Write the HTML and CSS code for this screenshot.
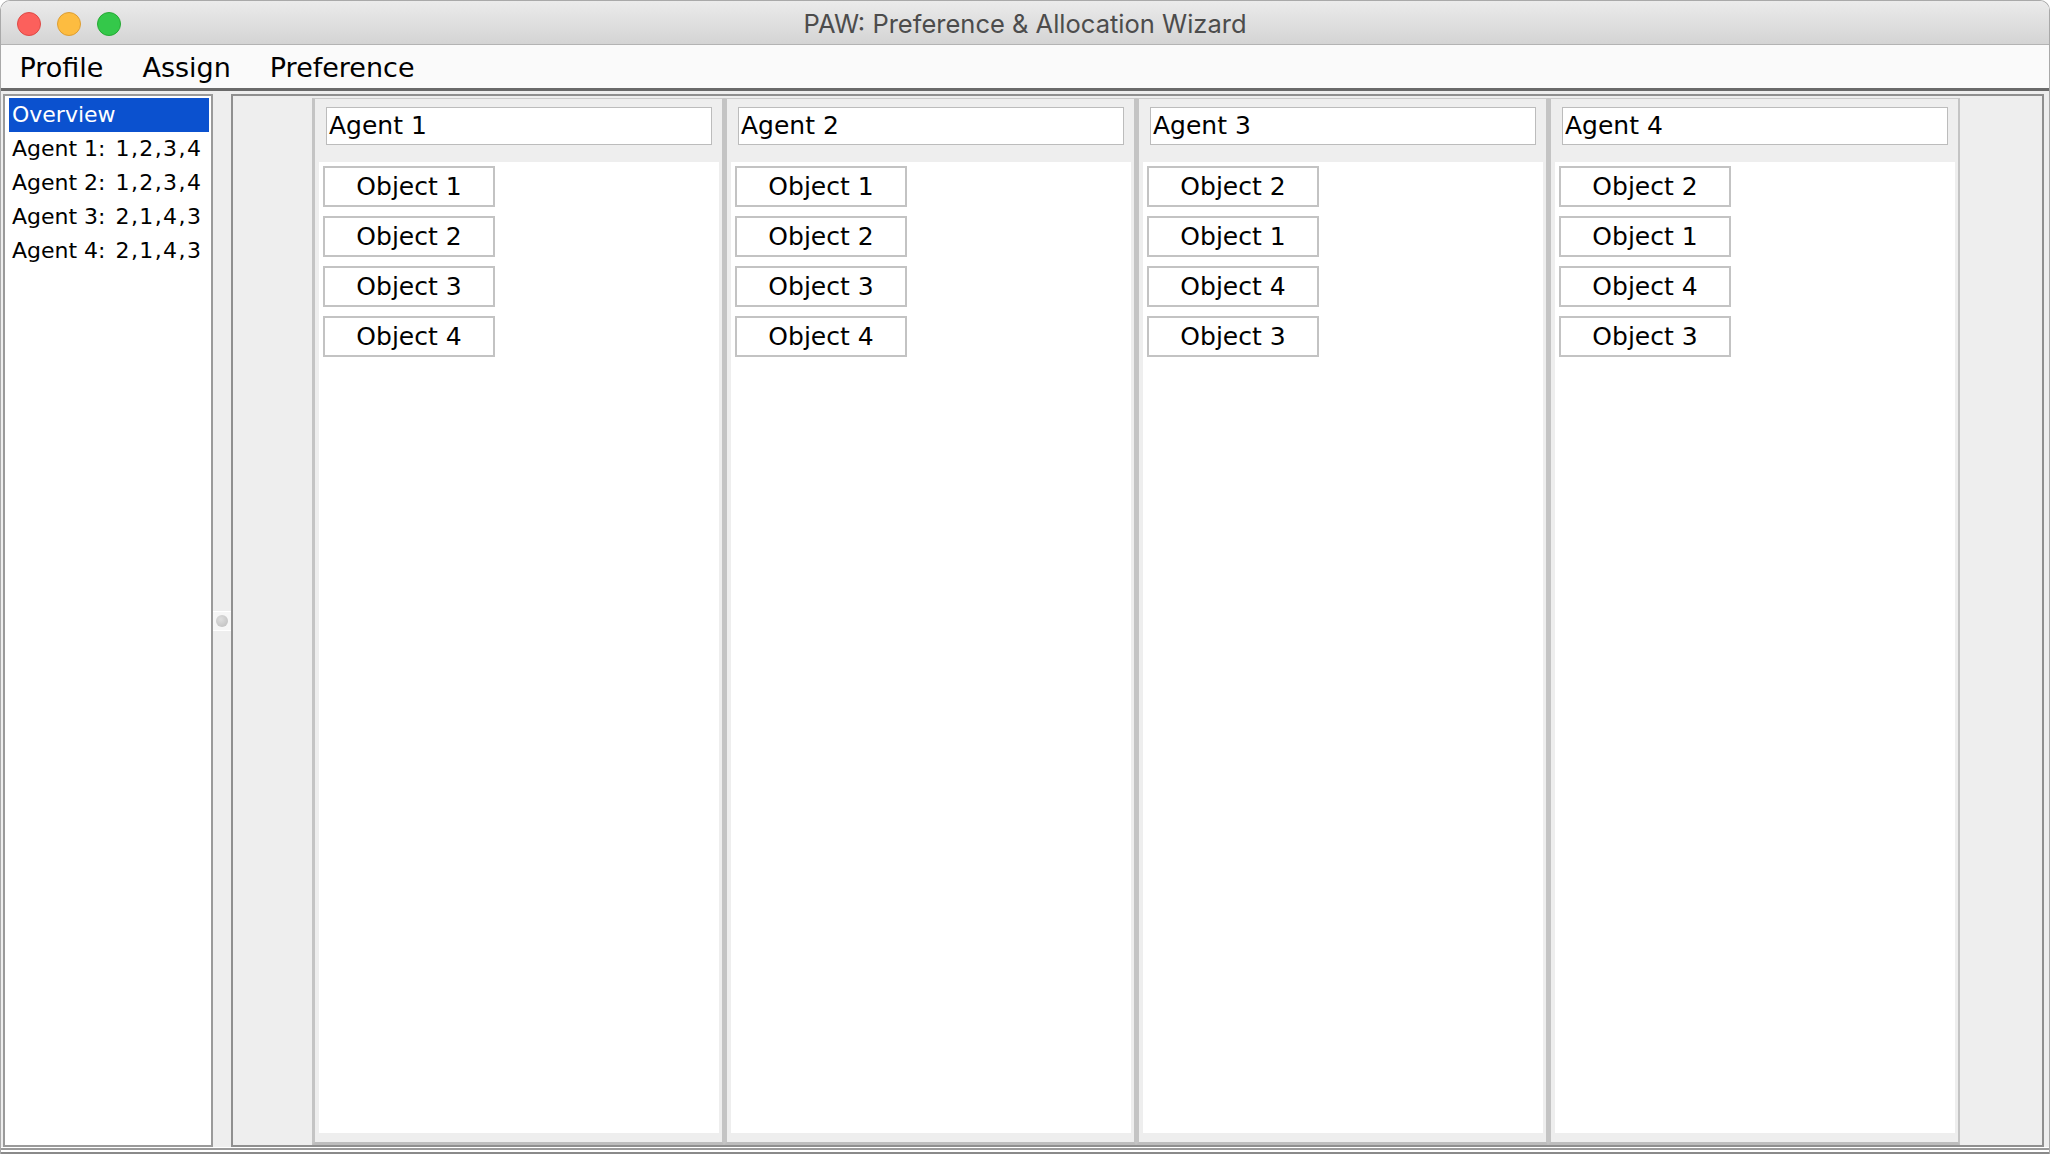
FILE: index.html
```html
<!DOCTYPE html>
<html>
<head>
<meta charset="utf-8">
<title>PAW: Preference &amp; Allocation Wizard</title>
<link rel="stylesheet" href="styles.css">
</head>
<body>
<div class="window">
  <div class="titlebar">
    <div class="lights">
      <span class="light red"></span>
      <span class="light yellow"></span>
      <span class="light green"></span>
    </div>
    <div class="title">PAW: Preference &amp; Allocation Wizard</div>
  </div>
  <div class="menubar">
    <span class="menu-item">Profile</span>
    <span class="menu-item">Assign</span>
    <span class="menu-item">Preference</span>
  </div>
  <div class="content">
    <div class="sidebar">
      <ul class="list">
        <li class="list-item selected">Overview</li>
        <li class="list-item">Agent 1:<span class="prefs">1,2,3,4</span></li>
        <li class="list-item">Agent 2:<span class="prefs">1,2,3,4</span></li>
        <li class="list-item">Agent 3:<span class="prefs">2,1,4,3</span></li>
        <li class="list-item">Agent 4:<span class="prefs">2,1,4,3</span></li>
      </ul>
    </div>
    <div class="splitter">
      <div class="handle"><span class="knob"></span></div>
    </div>
    <div class="main">
      <div class="column">
        <div class="field">Agent 1</div>
        <div class="objects">
          <div class="obj">Object 1</div>
          <div class="obj">Object 2</div>
          <div class="obj">Object 3</div>
          <div class="obj">Object 4</div>
        </div>
      </div>
      <div class="column">
        <div class="field">Agent 2</div>
        <div class="objects">
          <div class="obj">Object 1</div>
          <div class="obj">Object 2</div>
          <div class="obj">Object 3</div>
          <div class="obj">Object 4</div>
        </div>
      </div>
      <div class="column">
        <div class="field">Agent 3</div>
        <div class="objects">
          <div class="obj">Object 2</div>
          <div class="obj">Object 1</div>
          <div class="obj">Object 4</div>
          <div class="obj">Object 3</div>
        </div>
      </div>
      <div class="column">
        <div class="field">Agent 4</div>
        <div class="objects">
          <div class="obj">Object 2</div>
          <div class="obj">Object 1</div>
          <div class="obj">Object 4</div>
          <div class="obj">Object 3</div>
        </div>
      </div>
    </div>
  </div>
  <div class="bottom"></div>
</div>
</body>
</html>
```

FILE: styles.css
```css
html, body {
  margin: 0;
  padding: 0;
  background: #ffffff;
}

.window {
  width: 2050px;
  height: 1154px;
  box-sizing: border-box;
  border: 1px solid #a9a9a9;
  border-bottom: none;
  border-radius: 10px 10px 0 0;
  overflow: hidden;
  display: flex;
  flex-direction: column;
  font-family: "DejaVu Sans", "Liberation Sans", sans-serif;
  color: #000;
}

.titlebar {
  height: 43px;
  flex: 0 0 43px;
  border-bottom: 1px solid #b3b3b3;
  background: linear-gradient(#ebebeb, #d4d4d4);
  display: flex;
  align-items: center;
  position: relative;
}

.lights {
  display: flex;
  gap: 16px;
  padding-left: 16px;
  padding-top: 2px;
}

.light {
  width: 22px;
  height: 22px;
  border-radius: 50%;
  display: block;
}

.red { background: #fc605c; border: 1px solid #de4a46; }
.yellow { background: #fdbc40; border: 1px solid #dd9e33; }
.green { background: #34c84a; border: 1px solid #26a934; }

.title {
  position: absolute;
  left: 0;
  right: 0;
  top: 0;
  bottom: 0;
  display: flex;
  align-items: center;
  justify-content: center;
  padding-top: 1px;
  font-family: Inter, Roboto, "Noto Sans", sans-serif;
  font-size: 25.5px;
  color: #4c4c4c;
}

.menubar {
  height: 40px;
  flex: 0 0 40px;
  padding-top: 3px;
  background: #fafafa;
  border-bottom: 3px solid #6a6a6a;
  display: flex;
  align-items: center;
  padding-left: 0;
}

.menu-item {
  font-size: 27px;
  padding: 0 19.5px;
  line-height: 40px;
}

.menu-item:first-child {
  padding-left: 18.5px;
}

.content {
  flex: 1;
  display: flex;
  background: #eeeeee;
  padding: 3px 5px 0 2px;
  min-height: 0;
}

.sidebar {
  width: 210px;
  flex: 0 0 210px;
  box-sizing: border-box;
  border: 2px solid #9a9a9a;
  background: #ffffff;
  padding: 2px 2px 2px 4px;
}

.list {
  list-style: none;
  margin: 0;
  padding: 0;
}

.list-item {
  height: 34px;
  line-height: 34px;
  font-size: 22px;
  padding-left: 3px;
  white-space: nowrap;
}

.prefs {
  margin-left: 10px;
  letter-spacing: 1.4px;
}

.list-item.selected {
  background: #0b51cf;
  color: #ffffff;
}

.splitter {
  width: 18px;
  flex: 0 0 18px;
  display: flex;
  flex-direction: column;
  justify-content: center;
}

.handle {
  height: 18px;
  background: #f6f6f6;
  border-top: 1px solid #ffffff;
  border-bottom: 1px solid #ffffff;
  display: flex;
  align-items: center;
  justify-content: center;
}

.knob {
  width: 12px;
  height: 12px;
  border-radius: 50%;
  background: radial-gradient(circle at 40% 35%, #dedede, #bcbcbc);
  display: block;
}

.main {
  flex: 1;
  box-sizing: border-box;
  border: 2px solid #8f8f8f;
  background: #eeeeee;
  display: flex;
  justify-content: flex-start;
  padding-top: 2px;
  padding-left: 79px;
}

.column {
  width: 412px;
  flex: 0 0 412px;
  box-sizing: border-box;
  border-left: 3px solid #c4c4c4;
  border-right: 2px solid #c4c4c4;
  border-top: 1px solid #cbcbcb;
  border-bottom: 3px solid #bdbdbd;
  background: #eeeeee;
  padding: 8px 3px 9px 4px;
  display: flex;
  flex-direction: column;
}

.field {
  height: 38px;
  box-sizing: border-box;
  margin: 0 7px;
  border: 1px solid #bcbcbc;
  background: #ffffff;
  font-size: 25px;
  line-height: 36px;
  padding-left: 2px;
  white-space: nowrap;
}

.objects {
  flex: 1;
  margin-top: 17px;
  background: #ffffff;
  padding: 4px;
  display: flex;
  flex-direction: column;
  align-items: flex-start;
  gap: 9px;
}

.obj {
  width: 172px;
  height: 41px;
  box-sizing: border-box;
  border: 2px solid #c3c3c3;
  background: #ffffff;
  font-size: 25px;
  line-height: 37px;
  text-align: center;
  white-space: nowrap;
}

.bottom {
  height: 6px;
  flex: 0 0 6px;
  border-top: 1px solid #ffffff;
  background: linear-gradient(#9a9a9a 0 2px, #ffffff 2px 4px, #8a8a8a 4px 6px);
}
```
